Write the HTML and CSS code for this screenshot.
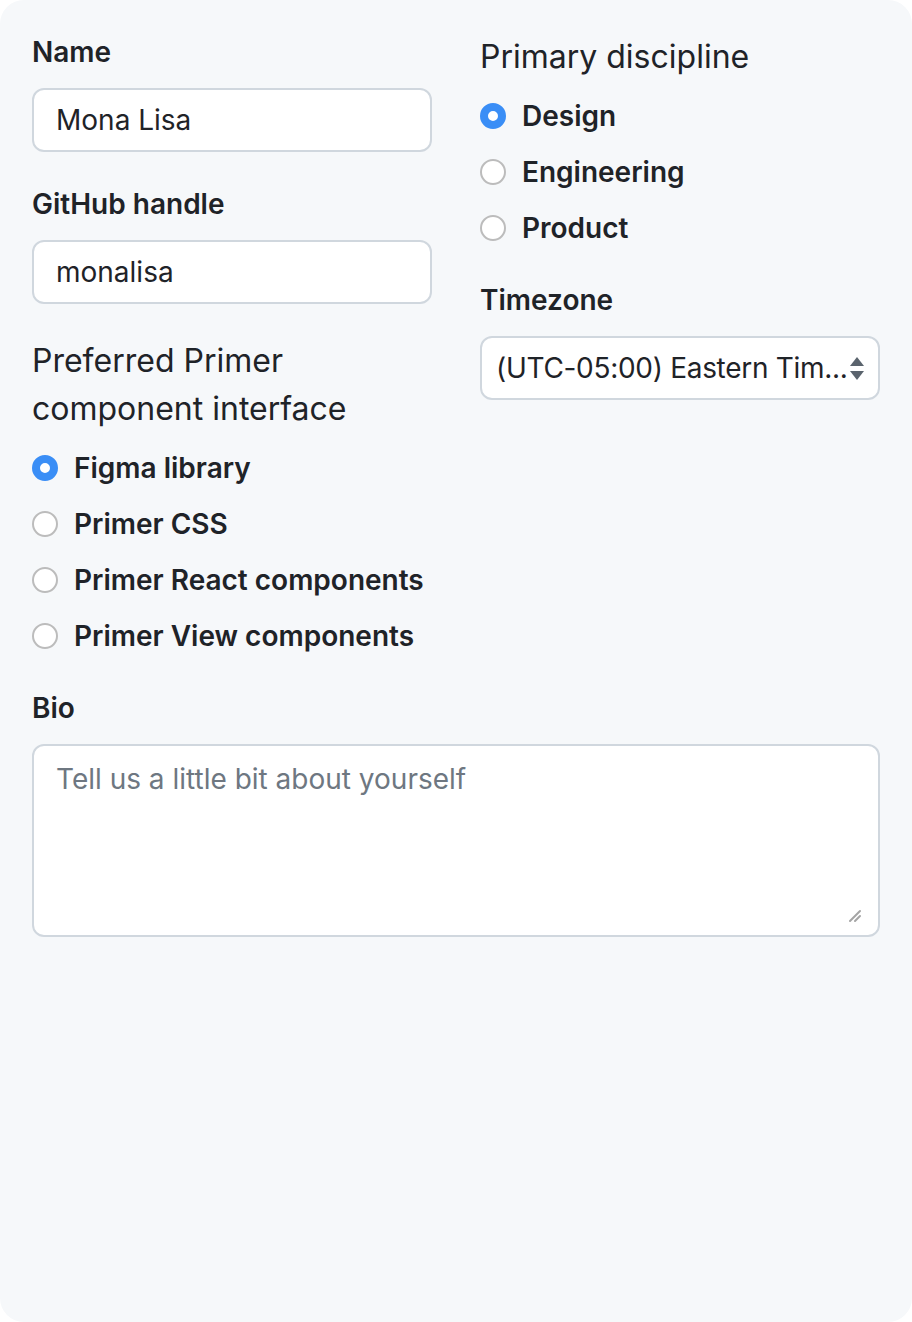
FILE: index.html
```html
<!DOCTYPE html>
<html lang="en">
<head>
<meta charset="utf-8">
<title>Profile form</title>
<link rel="stylesheet" href="styles.css">
</head>
<body>
<form class="card">
  <div class="grid">
    <div class="col">
      <div class="field">
        <label class="label" for="name">Name</label>
        <input class="input" id="name" type="text" value="Mona Lisa">
      </div>
      <div class="field">
        <label class="label" for="handle">GitHub handle</label>
        <input class="input" id="handle" type="text" value="monalisa">
      </div>
      <fieldset class="group">
        <legend class="legend">Preferred Primer component interface</legend>
        <div class="options">
          <label class="option"><input class="radio" type="radio" name="iface" checked><span>Figma library</span></label>
          <label class="option"><input class="radio" type="radio" name="iface"><span>Primer CSS</span></label>
          <label class="option"><input class="radio" type="radio" name="iface"><span>Primer React components</span></label>
          <label class="option"><input class="radio" type="radio" name="iface"><span>Primer View components</span></label>
        </div>
      </fieldset>
    </div>
    <div class="col">
      <fieldset class="group">
        <legend class="legend">Primary discipline</legend>
        <div class="options">
          <label class="option"><input class="radio" type="radio" name="disc" checked><span>Design</span></label>
          <label class="option"><input class="radio" type="radio" name="disc"><span>Engineering</span></label>
          <label class="option"><input class="radio" type="radio" name="disc"><span>Product</span></label>
        </div>
      </fieldset>
      <div class="field">
        <label class="label" for="tz">Timezone</label>
        <div class="select-wrap">
          <select class="select" id="tz">
            <option>(UTC-05:00) Eastern Tim...</option>
          </select>
          <svg class="select-arrows" width="14" height="24" viewBox="0 0 14 24" aria-hidden="true">
            <path d="M7 0 L14 9 L0 9 Z" fill="#5a636d"/>
            <path d="M0 14 L14 14 L7 23 Z" fill="#5a636d"/>
          </svg>
        </div>
      </div>
    </div>
    <div class="field wide">
      <label class="label" for="bio">Bio</label>
      <div class="textarea-wrap">
        <textarea class="textarea" id="bio" placeholder="Tell us a little bit about yourself"></textarea>
        <svg class="grip" width="14" height="14" viewBox="0 0 14 14" aria-hidden="true">
          <path d="M2 12 L12 2 M7 12 L12 7" stroke="#a5a5a5" stroke-width="2" stroke-linecap="round"/>
        </svg>
      </div>
    </div>
  </div>
</form>
</body>
</html>
```
FILE: styles.css
```css
* { box-sizing: border-box; }

html, body {
  margin: 0;
  padding: 0;
  background: #ffffff;
}

body {
  font-family: Inter, "Noto Sans", "Liberation Sans", sans-serif;
  color: #1f2328;
}

.card {
  width: 912px;
  height: 1322px;
  background: #f6f8fa;
  border-radius: 24px;
  padding: 32px;
  margin: 0;
}

.grid {
  display: grid;
  grid-template-columns: 400px 400px;
  column-gap: 48px;
  row-gap: 32px;
  align-items: start;
}

.col {
  display: flex;
  flex-direction: column;
  gap: 32px;
}

.wide {
  grid-column: 1 / 3;
}

.field {
  display: flex;
  flex-direction: column;
  gap: 16px;
}

.label {
  font-size: 28px;
  line-height: 40px;
  font-weight: 600;
  color: #1f2328;
}

.input,
.select,
.textarea {
  font-family: inherit;
  font-size: 28px;
  color: #1f2328;
  background: #ffffff;
  border: 2px solid #d0d7de;
  border-radius: 12px;
  outline: none;
  margin: 0;
}

.input {
  height: 64px;
  width: 100%;
  padding: 0 22px;
  line-height: 40px;
}

.group {
  border: 0;
  margin: 0;
  padding: 0;
  min-width: 0;
}

.legend {
  padding: 0;
  font-size: 32px;
  line-height: 48px;
  font-weight: 400;
  color: #1f2328;
}

.group .legend {
  padding-top: 1px;
}

.options {
  display: flex;
  flex-direction: column;
  gap: 16px;
  margin-top: 15px;
}

.option {
  display: flex;
  align-items: center;
  gap: 16px;
  height: 40px;
  font-size: 28px;
  line-height: 40px;
  font-weight: 600;
  color: #1f2328;
}

.radio {
  appearance: none;
  -webkit-appearance: none;
  width: 26px;
  height: 26px;
  margin: 0;
  flex: none;
  border-radius: 50%;
  border: 2px solid #bcbcbc;
  background: #ffffff;
}

.radio:checked {
  border: 8px solid #3a8ef6;
  background: #ffffff;
}

.select-wrap {
  position: relative;
}

.select {
  appearance: none;
  -webkit-appearance: none;
  width: 100%;
  height: 64px;
  padding: 0 14px 0 14px;
  line-height: 40px;
  letter-spacing: -0.3px;
}

.select-arrows {
  position: absolute;
  right: 16px;
  top: 21px;
  pointer-events: none;
}

.textarea-wrap {
  position: relative;
}

.textarea {
  display: block;
  width: 100%;
  height: 193px;
  padding: 13px 22px;
  line-height: 40px;
  resize: none;
}

.textarea::placeholder {
  color: #6e7781;
  opacity: 1;
}

.grip {
  position: absolute;
  right: 18px;
  bottom: 14px;
  pointer-events: none;
}
```
